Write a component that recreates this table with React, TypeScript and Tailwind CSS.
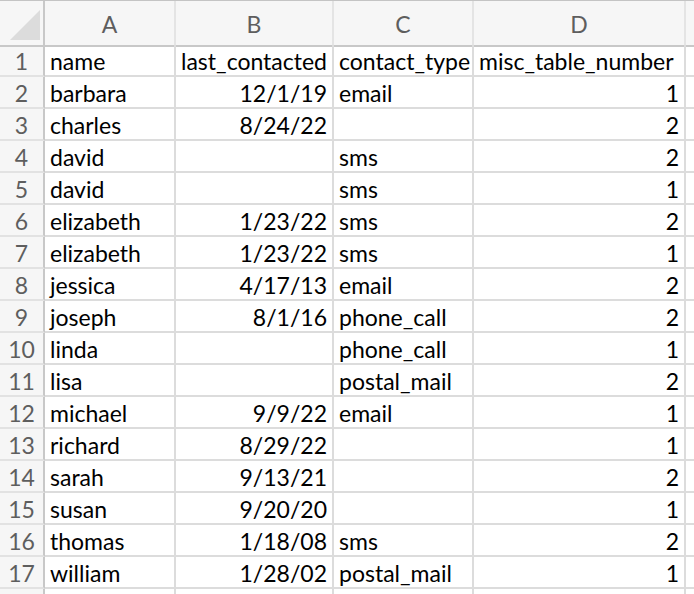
import React from 'react';

// 스프레드시트 한 장 — 헤더 + 17개 데이터 행
type Row = [string, string, string, string];

const rows: Row[] = [
  ['name', 'last_contacted', 'contact_type', 'misc_table_number'],
  ['barbara', '12/1/19', 'email', '1'],
  ['charles', '8/24/22', '', '2'],
  ['david', '', 'sms', '2'],
  ['david', '', 'sms', '1'],
  ['elizabeth', '1/23/22', 'sms', '2'],
  ['elizabeth', '1/23/22', 'sms', '1'],
  ['jessica', '4/17/13', 'email', '2'],
  ['joseph', '8/1/16', 'phone_call', '2'],
  ['linda', '', 'phone_call', '1'],
  ['lisa', '', 'postal_mail', '2'],
  ['michael', '9/9/22', 'email', '1'],
  ['richard', '8/29/22', '', '1'],
  ['sarah', '9/13/21', '', '2'],
  ['susan', '9/20/20', '', '1'],
  ['thomas', '1/18/08', 'sms', '2'],
  ['william', '1/28/02', 'postal_mail', '1'],
  ['', '', '', ''],
];

const cols = 'grid grid-cols-[45px_131px_158px_140px_212px_8px]';
const cell = 'h-[32px] border-r-2 border-b-2 border-[#dcdcdc] px-[5px] pt-[2px] leading-[28px] whitespace-nowrap overflow-hidden';

export default function App() {
  return (
    <div
      className="w-[694px] h-[594px] overflow-hidden bg-white text-[23px] text-black"
      style={{ fontFamily: 'Lato, "Liberation Sans", sans-serif' }}
    >
      {/* 열 머리글 */}
      <div className={`${cols} h-[45px] bg-[#f6f6f6] border-t border-[#c4c4c4]`}>
        <div className="relative border-r-2 border-b-2 border-[#c8c8c8]">
          <svg className="absolute left-[10px] top-[9px]" width="30" height="30" viewBox="0 0 30 30">
            <polygon points="30,0 30,30 0,30" fill="#dcdcdc" />
          </svg>
        </div>
        {['A', 'B', 'C', 'D'].map((c) => (
          <div
            key={c}
            className="border-r-2 border-b-2 border-r-[#e4e4e4] border-b-[#c8c8c8] text-center text-[#5e5e5e] leading-[42px] pt-[2px]"
          >
            {c}
          </div>
        ))}
        <div className="border-b-2 border-[#c8c8c8]" />
      </div>

      {/* 데이터 행 */}
      {rows.map((r, i) => (
        <div key={i} className={cols}>
          <div className="h-[32px] bg-[#f6f6f6] border-r-2 border-r-[#c8c8c8] border-b-2 border-b-[#e2e2e2] text-center text-[#5e5e5e] leading-[28px] pt-[2px]">
            {i < 17 ? i + 1 : ''}
          </div>
          <div className={cell}>{r[0]}</div>
          <div className={`${cell} text-right`}>{r[1]}</div>
          <div className={cell}>{r[2]}</div>
          <div className={`${cell} ${i === 0 ? 'text-left' : 'text-right'}`}>{r[3]}</div>
          <div className="h-[32px] border-b-2 border-[#dcdcdc]" />
        </div>
      ))}
    </div>
  );
}
